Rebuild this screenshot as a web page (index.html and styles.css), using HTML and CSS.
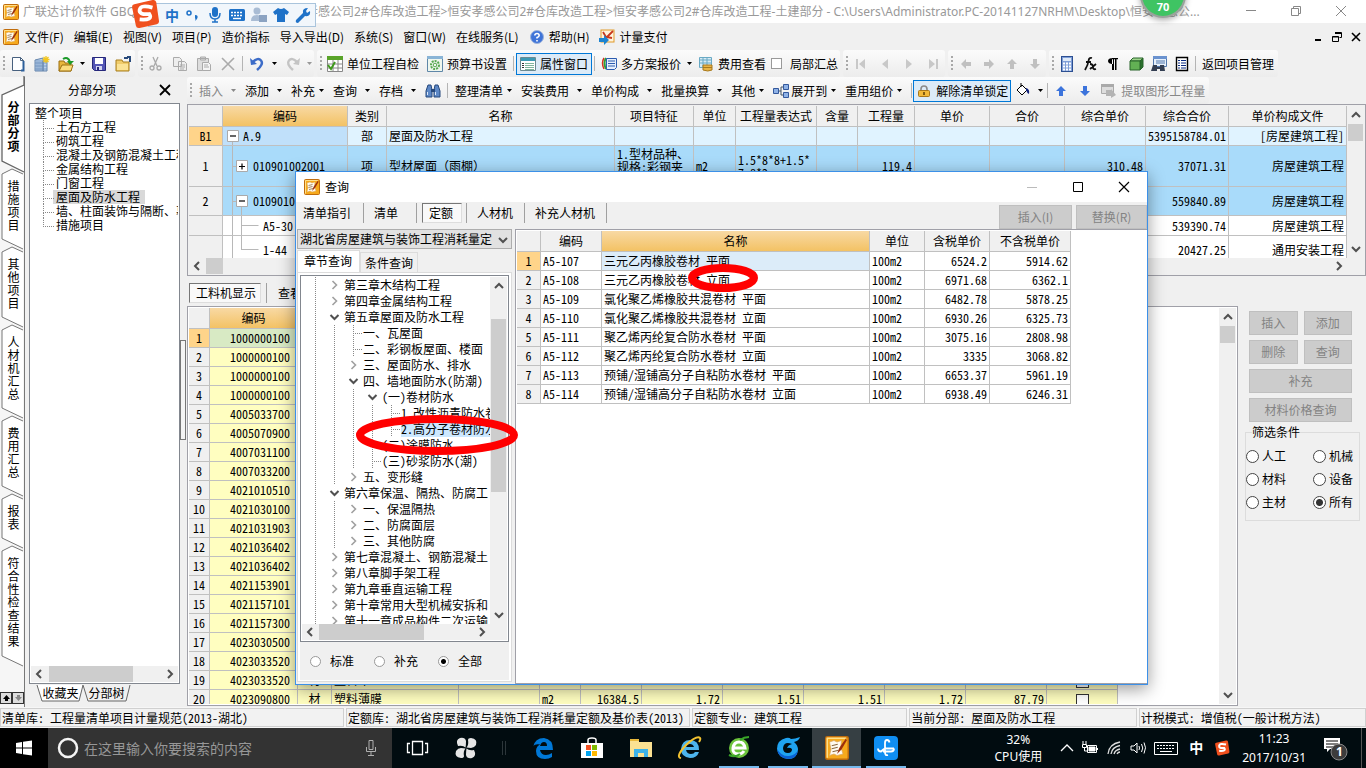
FILE: index.html
```html
<!DOCTYPE html>
<html lang="zh-CN">
<head>
<meta charset="utf-8">
<title>广联达计价软件</title>
<link rel="stylesheet" href="styles.css">
</head>
<body>
<svg class="defs" aria-hidden="true">
  <symbol id="app" viewBox="0 0 16 16"><rect x=".5" y=".5" width="15" height="15" rx="1" fill="#f6a91c" stroke="#c06c0c"/><path d="M1.500 14.500V1.500H14" fill="none" stroke="#ffdf8a"/><path d="M3 4l3-1 2 1 3-1-.5 4 1.500 5-4 1-2-1-3 1 1-4z" fill="#fffaf0" stroke="#d9a860" stroke-width=".5"/><path d="M4.500 6.500l4-1M4.500 8.500l4-1M5 10.500l4-1" stroke="#8a6a42" stroke-width=".8"/><path d="M14 1.500L9.500 8 8 12l3-3 3.500-6z" fill="#9c2f0c"/></symbol>
  <symbol id="car" viewBox="0 0 7 4"><path d="M1 0h5L3.500 3z" fill="currentColor"/></symbol>
  <symbol id="cl" viewBox="0 0 10 10"><path d="M7 1L3 5l4 4" fill="none" stroke="#505050" stroke-width="2"/></symbol>
  <symbol id="cr" viewBox="0 0 10 10"><path d="M3 1l4 4-4 4" fill="none" stroke="#505050" stroke-width="2"/></symbol>
  <symbol id="cu" viewBox="0 0 10 10"><path d="M1 7l4-4 4 4" fill="none" stroke="#505050" stroke-width="2"/></symbol>
  <symbol id="cd" viewBox="0 0 10 10"><path d="M1 3l4 4 4-4" fill="none" stroke="#505050" stroke-width="2"/></symbol>
  <symbol id="cg" viewBox="0 0 10 10"><path d="M3 1l4 4-4 4" fill="none" stroke="#a0a0a0" stroke-width="1.600"/></symbol>
  <symbol id="aup" viewBox="0 0 12 12"><path d="M6 1l5 5H8v5H4V6H1z"/></symbol>
  <symbol id="sogou" viewBox="0 0 28 28"><path d="M4 5L21 1q3-.5 3.500 2L27 20q.5 3-2 3.500L9 27q-3 .5-3.500-2L2 8q-.5-2.500 2-3z" fill="#f0501e"/><path d="M21 8Q10 5 9 10t9 4q4 6-9 5" fill="none" stroke="#fff" stroke-width="3.500"/></symbol>
</svg>

<header class="titlebar">
  <svg class="i16"><use href="#app"/></svg>
  <span class="t1">广联达计价软件 GBQ4.0 - [</span>
  <span class="t2">恒安孝感公司2#仓库改造工程&gt;恒安孝感公司2#仓库改造工程&gt;恒安孝感公司2#仓库改造工程-土建部分 - C:\Users\Administrator.PC-20141127NRHM\Desktop\恒安孝感公...</span>
  <div class="winbtns">
    <button aria-label="最小化"><svg width="12" height="12"><path d="M1 5.500h10" stroke="#888"/></svg></button>
    <button aria-label="还原"><svg width="12" height="12" fill="none" stroke="#888"><path d="M1.500 3.500h7v7h-7zM3.500 3.500v-2h7v7h-2"/></svg></button>
    <button aria-label="关闭"><svg width="12" height="12"><path d="M1 1l10 10M11 1L1 11" stroke="#888"/></svg></button>
  </div>
</header>

<nav class="menubar">
  <svg class="i16"><use href="#app"/></svg>
  <button>文件(F)</button><button>编辑(E)</button><button>视图(V)</button><button>项目(P)</button><button>造价指标</button><button>导入导出(D)</button><button>系统(S)</button><button>窗口(W)</button><button>在线服务(L)</button>
  <button><svg class="i16"><circle cx="8" cy="8" r="6.500" fill="#3f74d8" stroke="#9db4dc"/><path d="M5.800 6.500Q6 4.500 8 4.500t2.200 2Q10 8 8 8.500V9.500M8 11v1.500" fill="none" stroke="#fff" stroke-width="1.600"/></svg>帮助(H)</button>
  <button><svg class="i16"><rect x="2" y="1" width="13" height="12" fill="#fff3dc" stroke="#e09a28"/><path d="M14 2L7 9M4 3l3 5 6 1" stroke="#c8381c" stroke-width="1.800" fill="none"/><path d="M0 9h5V6l5 5-5 5v-3H0z" fill="#1d84d0"/></svg>计量支付</button>
  <div class="mdi">
    <button aria-label="最小化子窗口"><svg width="10" height="10"><path d="M2 8h6" stroke="#000" stroke-width="2"/></svg></button>
    <button aria-label="还原子窗口"><svg width="10" height="10" fill="none" stroke="#000"><path d="M3 .500h6.500v5h-2M3 1.500h6M.5 4.500h6v5h-6zM.5 5h6"/></svg></button>
    <button aria-label="关闭子窗口"><svg width="10" height="10"><path d="M1 1l8 8M9 1L1 9" stroke="#000" stroke-width="1.600"/></svg></button>
  </div>
</nav>

<div class="toolbar">
  <div class="grp">
    <i class="grip"></i>
    <button class="ib" aria-label="新建"><svg class="i16"><path d="M2.500 1.500h8l3 3v10h-11z" fill="#fdfeff" stroke="#47607e"/><path d="M10.500 1.500v3h3" fill="none" stroke="#47607e"/><path d="M11 14.500h2.500V5" stroke="#2c5f9a" stroke-width="2" fill="none"/></svg></button>
    <button class="ib" aria-label="新建项目"><svg class="i16"><path d="M1 4l8-2v13H1zM9 5h4v10H9z" fill="#b9d0ea" stroke="#6484ab"/><path d="M3 4v11M5 4v11M7 4v11M1 7h12M1 10h12M1 13h12" stroke="#6c8fbd" stroke-width=".8"/><path d="M12 0v7M8.500 3.500h7M9.500 1l5 5M14.500 1l-5 5" stroke="#f2c61e" stroke-width="1.300"/></svg></button>
    <button class="ib" aria-label="打开"><svg class="i16"><path d="M1 5h5l1 2h6v8H1z" fill="#e9b63c" stroke="#9b6f10"/><path d="M1 15l3-6h11l-2 6z" fill="#fbdc7d" stroke="#9b6f10"/><path d="M5 3q5-3 7 3" fill="none" stroke="#1c9a2a" stroke-width="2"/><path d="M9 5h7l-4 4z" fill="#1c9a2a"/></svg></button>
    <svg class="car"><use href="#car"/></svg>
    <button class="ib" aria-label="保存"><svg class="i16"><path d="M1.500 1.500h13v13h-11l-2-2z" fill="#5456b5" stroke="#25277a"/><path d="M4 2h8v6H4z" fill="#fff"/><path d="M5 10h6v4H5z" fill="#d4d6f0"/><path d="M6 11h2v3H6z" fill="#25277a"/></svg></button>
    <button class="ib" aria-label="文件夹"><svg class="i16"><path d="M1 4h6l1 2h6v9H1z" fill="#f0cc6a" stroke="#a87e1c"/><path d="M2 8h11v6H2z" fill="#fbe394"/><path d="M9 2h4M12 1h3v5" fill="none" stroke="#2a4b7c" stroke-width="2"/></svg></button>
  </div>
  <div class="grp">
    <i class="grip"></i>
    <button class="ib" aria-label="剪切"><svg class="i16" fill="none" stroke="#aaa" stroke-width="1.300"><path d="M5 1l4 9M10 1L6 10"/><circle cx="4" cy="12" r="2"/><circle cx="11" cy="12" r="2"/></svg></button>
    <button class="ib" aria-label="复制"><svg class="i16" fill="#eee" stroke="#aaa"><path d="M1.500 1.500h6l2 2v7h-8zM6.500 5.500h6l2 2v7h-8z"/><path d="M8 9h5M8 11h5M8 13h4"/></svg></button>
    <button class="ib" aria-label="粘贴"><svg class="i16" fill="#ddd" stroke="#aaa"><path d="M1.500 2.500h11v12h-11zM4.500 1h5v3h-5z"/><path d="M6.500 6.500h6l2 2v6h-8z" fill="#f4f4f4"/><path d="M8 9h4M8 11h5"/></svg></button>
    <button class="ib" aria-label="删除"><svg class="i16"><path d="M2 2l12 12M14 2L2 14" stroke="#aaa" stroke-width="1.600"/></svg></button>
    <i class="sep"></i>
    <button class="ib" aria-label="撤销"><svg class="i16"><path d="M4 6q5-5 8-1.500T8 14" fill="none" stroke="#3c6cc8" stroke-width="2.500"/><path d="M1 2l1 7 6-1z" fill="#3c6cc8"/></svg></button>
    <svg class="car wide"><use href="#car"/></svg>
    <button class="ib" aria-label="重做"><svg class="i16"><path d="M12 6Q7 1 4 4.500T8 14" fill="none" stroke="#c4c4c4" stroke-width="2.500"/><path d="M15 2l-1 7-6-1z" fill="#c4c4c4"/></svg></button>
    <svg class="car dim"><use href="#car"/></svg>
  </div>
  <div class="grp">
    <i class="grip"></i>
    <button class="lb"><svg class="i16"><path d="M.5 .5h15v15H.5z" fill="#fff" stroke="#888"/><path d="M0 0h16v4H0z" fill="#5aa42a"/><path d="M1 8h14M1 12h14M6 4v11M11 4v11" stroke="#888"/><path d="M1 9l3 4 4-7" fill="none" stroke="#3f9a1c" stroke-width="2"/></svg>单位工程自检</button>
    <button class="lb"><svg class="i16"><path d="M.5 .5h15v15H.5z" fill="#eef6ee" stroke="#5f87a8"/><path d="M0 0h16v3H0z" fill="#8ab4d6"/><circle cx="8" cy="9" r="4" fill="none" stroke="#58a850" stroke-width="2" stroke-dasharray="2 1"/><circle cx="8" cy="9" r="1.800" fill="none" stroke="#58a850"/></svg>预算书设置</button>
    <i class="sep"></i>
    <button class="lb on"><svg class="i16"><path d="M.5 1.500h15v13H.5z" fill="#fff" stroke="#6a8a92"/><path d="M1 2h14v3H1z" fill="#3c9ab4"/><path d="M2 7.500h2M2 9.500h2M2 11.500h2" stroke="#333"/><path d="M5 7.500h9M5 9.500h9M5 11.500h9M5 13.500h9" stroke="#7fb69c"/></svg>属性窗口</button>
    <i class="sep"></i>
    <button class="lb"><svg class="i16"><path d="M3 2Q0 7 3 13" fill="none" stroke="#d83020" stroke-width="1.500"/><path d="M5 2Q2 7 5 13" fill="none" stroke="#2f9e3a" stroke-width="2"/><path d="M5.500 2.500h10v9l-2 2h-8z" fill="#e6effc" stroke="#2c5cb0"/><path d="M7 5h7M7 7.500h7M7 10h7" stroke="#2c5cb0"/></svg>多方案报价</button>
    <svg class="car"><use href="#car"/></svg>
    <button class="lb"><svg class="i16"><path d="M1.500 1.500h12v10h-12z" fill="#d6ebf5" stroke="#69a9c4"/><path d="M1 4h13M1 7h13M5 1v10M9 1v10" stroke="#69a9c4"/><path d="M5 9h9v5q-4 2-9 0z" fill="#e8b446" stroke="#a8791c"/><path d="M5 11.500h9" stroke="#a8791c"/></svg>费用查看</button>
    <label class="chk"><input type="checkbox">局部汇总</label>
  </div>
  <div class="grp">
    <i class="grip"></i>
    <button class="ib" aria-label="首页"><svg class="i16" fill="#c8c8c8"><path d="M3 3h2v10H3zM12 3v10L6 8z"/></svg></button>
    <button class="ib" aria-label="上一页"><svg class="i16" fill="#c8c8c8"><path d="M11 3v10L5 8z"/></svg></button>
    <button class="ib" aria-label="下一页"><svg class="i16" fill="#c8c8c8"><path d="M5 3v10l6-5z"/></svg></button>
    <button class="ib" aria-label="末页"><svg class="i16" fill="#c8c8c8"><path d="M4 3v10l6-5zM11 3h2v10h-2z"/></svg></button>
  </div>
  <div class="grp tight gray">
    <i class="grip"></i>
    <button class="ib" aria-label="左移"><svg class="i12 r270"><use href="#aup"/></svg></button>
    <button class="ib" aria-label="右移"><svg class="i12 r90"><use href="#aup"/></svg></button>
    <button class="ib" aria-label="上移"><svg class="i12"><use href="#aup"/></svg></button>
    <button class="ib" aria-label="下移"><svg class="i12 r180"><use href="#aup"/></svg></button>
  </div>
  <div class="grp tight last">
    <i class="grip"></i>
    <button class="ib" aria-label="计算器"><svg class="i16"><rect x="2.500" y=".5" width="11" height="15" fill="#7f9fd8" stroke="#2c4f92"/><path d="M4 2h8v3H4z" fill="#dfeaf8"/><path d="M4 7.500h8M4 10.500h8M4 13.500h8" stroke="#fff" stroke-width="2" stroke-dasharray="2 1"/></svg></button>
    <button class="ib" aria-label="函数"><svg class="i16" fill="none" stroke="#111" stroke-width="1.800"><path d="M10 2Q7 1 6.500 5T3 14M4 6h5M8 8q3 0 3 3t3 2M14 8L8 13"/></svg></button>
    <button class="ib" aria-label="段落"><svg class="i16"><path d="M8 2Q3 2 3 5t5 3zM7 2h2v12H7zM10 2h1.500v12H10zM7 2h6v1.200H7z"/></svg></button>
    <button class="ib" aria-label="立方体"><svg class="i16"><path d="M2 5l3-3h10l-3 3z" fill="#9ed48c" stroke="#28642a"/><path d="M12 5l3-3v9l-3 3z" fill="#2b702d" stroke="#28642a"/><path d="M2 5h10v9H2z" fill="#62b054" stroke="#28642a"/></svg></button>
    <button class="ib" aria-label="查找表"><svg class="i16"><path d="M2.500 .5h13v10h-13z" fill="#e6f0fb" stroke="#5177ac"/><path d="M2 0h14v3H2z" fill="#6a92cf"/><path d="M5 5h9M5 7h9" stroke="#5177ac"/><path d="M2 9h4v2h3V9h4l1 6H9v-2H6v2H0z" fill="#333e52"/></svg></button>
    <button class="ib" aria-label="清单"><svg class="i16"><path d="M2.500 1.500h11v13h-11z" fill="#fff" stroke="#000" stroke-width="1.400"/><path d="M4 4.500h2M4 7h2M4 9.500h2M4 12h2M7 4.500h5M7 7h5M7 9.500h5M7 12h5" stroke="#0a2a80"/></svg></button>
    <i class="sep"></i>
    <button class="lb">返回项目管理</button>
  </div>
</div>

<main class="work">
  <nav class="vtabs">
    <button class="vt first"><svg width="25" height="96"><path d="M24-1v9L2 18v66l22 11" fill="#fff" stroke="#666" stroke-width="1.300"/></svg><span>分部分项</span></button>
    <button class="vt"><svg width="25" height="82"><path d="M23 5L12 0 2 5v65l21 10" fill="#fff" stroke="#777"/></svg><span>措施项目</span></button>
    <button class="vt"><svg width="25" height="82"><path d="M23 5L12 0 2 5v65l21 10" fill="#fff" stroke="#777"/></svg><span>其他项目</span></button>
    <button class="vt"><svg width="25" height="95"><path d="M23 5L12 0 2 5v78l21 10" fill="#fff" stroke="#777"/></svg><span>人材机汇总</span></button>
    <button class="vt"><svg width="25" height="82"><path d="M23 5L12 0 2 5v65l21 10" fill="#fff" stroke="#777"/></svg><span>费用汇总</span></button>
    <button class="vt"><svg width="25" height="56"><path d="M23 5L12 0 2 5v39l21 10" fill="#fff" stroke="#777"/></svg><span>报表</span></button>
    <button class="vt"><svg width="25" height="121"><path d="M23 5L12 0 2 5v105l21 10" fill="#fff" stroke="#777"/></svg><span>符合性检查结果</span></button>
    <div class="vend"><button aria-label="上"><svg width="11" height="10"><path d="M5.500 2L9 6H7v2H4V6H2z"/></svg></button><button aria-label="下"><svg width="11" height="10"><path d="M5.500 8L9 4H7V2H4v2H2z" fill="#888"/></svg></button></div>
  </nav>

  <aside class="left">
    <div class="lhead"><span>分部分项</span><button aria-label="关闭面板"><svg width="12" height="12"><path d="M1 1l10 10M11 1L1 11" stroke="#000" stroke-width="1.800"/></svg></button></div>
    <div class="ltree">
      <ul>
        <li class="root">整个项目</li>
        <li>土石方工程</li><li>砌筑工程</li><li>混凝土及钢筋混凝土工程</li><li>金属结构工程</li><li>门窗工程</li><li><b>屋面及防水工程</b></li><li>墙、柱面装饰与隔断、幕墙</li><li>措施项目</li>
      </ul>
      <div class="hs"><svg class="c10"><use href="#cl"/></svg><i class="lthumb"></i><svg class="c10 end"><use href="#cr"/></svg></div>
    </div>
    <div class="ltabs">
      <button><svg width="48" height="17"><path d="M1 0l5 16h37l4-16" fill="#fff" stroke="#666"/></svg><span>收藏夹</span></button>
      <button><svg width="50" height="17"><path d="M1 0l5 16h38l4-16" fill="#f0f0f0" stroke="#666"/></svg><span>分部树</span></button>
    </div>
  </aside>
  <div class="split"><i></i></div>

  <section class="right">
    <div class="toolbar t2bar"><div class="grp last">
      <i class="grip"></i>
      <button class="dd dis">插入<svg class="car w"><use href="#car"/></svg></button>
      <button class="dd">添加<svg class="car w"><use href="#car"/></svg></button>
      <button class="dd">补充<svg class="car n"><use href="#car"/></svg></button>
      <button class="dd">查询<svg class="car w"><use href="#car"/></svg></button>
      <button class="dd">存档<svg class="car w"><use href="#car"/></svg></button>
      <button aria-label="查找"><svg class="i16"><path d="M3 2h3l1 5v7H1V8zM10 2h3l2 6v6H9V7z" fill="#5d88c6" stroke="#27497c"/><path d="M6 6h4v3H6z" fill="#27497c"/><path d="M2.500 9v3M10.500 9v3" stroke="#dce9fa"/></svg></button>
      <i class="sep s2"></i>
      <button class="dd">整理清单<svg class="car n"><use href="#car"/></svg></button>
      <button class="dd">安装费用<svg class="car w"><use href="#car"/></svg></button>
      <button class="dd">单价构成<svg class="car w"><use href="#car"/></svg></button>
      <button class="dd">批量换算<svg class="car w"><use href="#car"/></svg></button>
      <button class="dd">其他<svg class="car n"><use href="#car"/></svg></button>
      <button class="dd"><svg class="i16"><path d="M5 8h3M11 4H8v8h3" fill="none" stroke="#456"/><path d="M.5 5.500h5v5h-5zM10.500 1.500h5v5h-5zM10.500 9.500h5v5h-5z" fill="#8fb2e6" stroke="#33589c"/></svg>展开到<svg class="car n"><use href="#car"/></svg></button>
      <button class="dd">重用组价<svg class="car n"><use href="#car"/></svg></button>
      <i class="sep"></i>
      <button class="lb on lock"><svg class="i12"><path d="M3 6V4q0-3 3-3t3 3v2" fill="none" stroke="#8a8a8a" stroke-width="1.600"/><rect x=".5" y="5.500" width="11" height="6" rx="1" fill="#f1b93a" stroke="#a8761a"/><path d="M6 7v3" stroke="#5a3c08" stroke-width="1.500"/></svg>解除清单锁定</button>
      <button class="ib" aria-label="填充"><svg class="i16"><path d="M2 7l5-5 5 5-5 5z" fill="#fff" stroke="#000"/><path d="M6 4V0" stroke="#000"/><path d="M11 5q4 1 3 6-2-1-3-4z" fill="#12237c"/></svg></button>
      <svg class="car wide"><use href="#car"/></svg>
      <i class="sep"></i>
      <button class="ib blue" aria-label="上移行"><svg class="i12"><use href="#aup"/></svg></button>
      <button class="ib blue" aria-label="下移行"><svg class="i12 r180"><use href="#aup"/></svg></button>
      <button class="lb dis"><svg class="i16"><path d="M.5 1.500h12v9H.5z" fill="#ddd" stroke="#aaa"/><path d="M0 1h13v3H0z" fill="#aaa"/><path d="M5 7h5v-1l5 6-5 3v-2H5z" fill="#b4b4b4"/></svg>提取图形工程量</button>
    </div></div>

    <div class="g1">
      <div class="g1row">
        <div class="g1scroll">
          <table class="grid gtop">
            <colgroup><col style="width:34px"><col style="width:125px"><col style="width:39px"><col style="width:228px"><col style="width:79px"><col style="width:42px"><col style="width:81px"><col style="width:41px"><col style="width:57px"><col style="width:75px"><col style="width:75px"><col style="width:81px"><col style="width:83px"><col></colgroup>
            <tr class="h"><th></th><th class="gold">编码</th><th>类别</th><th>名称</th><th>项目特征</th><th>单位</th><th>工程量表达式</th><th>含量</th><th>工程量</th><th>单价</th><th>合价</th><th>综合单价</th><th>综合合价</th><th>单价构成文件</th></tr>
            <tr class="b1"><th class="cur">B1</th><td class="cell0"><div class="tc"><svg width="20" height="18"><path d="M9.500 15v4" stroke="#b8b8b8"/><path d="M4.500 3.500h11v11h-11z" fill="#fff" stroke="#aaa"/><path d="M7 9h6" stroke="#000" stroke-width="1.200"/></svg>A.9</div></td><td class="c">部</td><td>屋面及防水工程</td><td></td><td></td><td></td><td></td><td></td><td></td><td></td><td></td><td class="r">5395158784.01</td><td class="r">[房屋建筑工程]</td></tr>
            <tr class="r1"><th>1</th><td><div class="tc"><svg width="30" height="40"><path d="M9.500 0v41M9.500 20.500h5" stroke="#b8b8b8"/><path d="M13.500 14.500h11v11h-11z" fill="#fff" stroke="#aaa"/><path d="M16 20.500h6M19 17.500v6" stroke="#000" stroke-width="1.200"/></svg>010901002001</div></td><td class="c">项</td><td>型材屋面（雨棚）</td><td><div class="clip">1.型材品种、规格:彩钢夹芯板</div></td><td>m2</td><td><div class="clip low">1.5*8*8+1.5*7.8*2</div></td><td></td><td class="r">119.4</td><td></td><td></td><td class="r">310.48</td><td class="r">37071.31</td><td class="r">房屋建筑工程</td></tr>
            <tr class="r2"><th>2</th><td><div class="tc"><svg width="30" height="28"><path d="M9.500 0v29M9.500 14.500h5M18.500 20v9" stroke="#b8b8b8"/><path d="M13.500 8.500h11v11h-11z" fill="#fff" stroke="#aaa"/><path d="M16 14h6" stroke="#000" stroke-width="1.200"/></svg>010901003001</div></td><td></td><td></td><td></td><td></td><td></td><td></td><td></td><td></td><td></td><td></td><td class="r">559840.89</td><td class="r">房屋建筑工程</td></tr>
            <tr class="r3"><th></th><td><div class="tc"><svg width="40" height="19"><path d="M9.500 0v20M18.500 0v20M18.500 9.500h17" stroke="#b8b8b8"/></svg>A5-30</div></td><td></td><td></td><td></td><td></td><td></td><td></td><td></td><td></td><td></td><td></td><td class="r">539390.74</td><td class="r">房屋建筑工程</td></tr>
            <tr class="r4"><th></th><td><div class="tc"><svg width="40" height="27"><path d="M9.500 0v27M18.500 0v14M18.500 13.500h17" stroke="#b8b8b8"/></svg>1-44</div></td><td></td><td></td><td></td><td></td><td></td><td></td><td></td><td></td><td></td><td></td><td class="r">20427.25</td><td class="r">通用安装工程</td></tr>
          </table>
        </div>
        <div class="vs"><svg class="c10"><use href="#cu"/></svg><i class="vthumb"></i><svg class="c10 end"><use href="#cd"/></svg></div>
      </div>
      <div class="hs g1hs"><svg class="c10"><use href="#cl"/></svg><i class="sthumb"></i><svg class="c10 end"><use href="#cr"/></svg></div>
    </div>

    <div class="subtabs"><button class="pressed">工料机显示</button><i class="sep"></i><button>查看</button></div>

    <div class="lower">
      <div class="g2">
        <div class="g2scroll">
          <table class="grid gbot">
            <colgroup><col style="width:21px"><col style="width:88px"><col style="width:34px"><col style="width:127px"><col style="width:81px"><col style="width:41px"><col style="width:61px"><col style="width:81px"><col style="width:81px"><col style="width:81px"><col style="width:81px"><col style="width:81px"><col style="width:71px"></colgroup>
            <tr class="h"><th></th><th class="gold">编码</th><th></th><th></th><th></th><th></th><th></th><th></th><th></th><th></th><th></th><th></th><th></th></tr>
            <tr><th class="cur">1</th><td class="code sel">1000000100</td><td colspan="11"></td></tr>
            <tr><th>2</th><td class="code">1000000100</td><td colspan="11"></td></tr>
            <tr><th>3</th><td class="code">1000000100</td><td colspan="11"></td></tr>
            <tr><th>4</th><td class="code">1000000100</td><td colspan="11"></td></tr>
            <tr><th>5</th><td class="code">4005033700</td><td colspan="11"></td></tr>
            <tr><th>6</th><td class="code">4005070900</td><td colspan="11"></td></tr>
            <tr><th>7</th><td class="code">4007031100</td><td colspan="11"></td></tr>
            <tr><th>8</th><td class="code">4007033200</td><td colspan="11"></td></tr>
            <tr><th>9</th><td class="code">4021010510</td><td colspan="11"></td></tr>
            <tr><th>10</th><td class="code">4021030100</td><td colspan="11"></td></tr>
            <tr><th>11</th><td class="code">4021031903</td><td colspan="11"></td></tr>
            <tr><th>12</th><td class="code">4021036402</td><td colspan="11"></td></tr>
            <tr><th>13</th><td class="code">4021036402</td><td colspan="11"></td></tr>
            <tr><th>14</th><td class="code">4021153901</td><td colspan="11"></td></tr>
            <tr><th>15</th><td class="code">4021157101</td><td colspan="11"></td></tr>
            <tr><th>16</th><td class="code">4021157300</td><td colspan="11"></td></tr>
            <tr><th>17</th><td class="code">4023030500</td><td colspan="11"></td></tr>
            <tr><th>18</th><td class="code">4023033520</td><td colspan="11"></td></tr>
            <tr><th>19</th><td class="code">4023033520</td><td class="c">材</td><td class="l">塑料布</td><td></td><td></td><td></td><td></td><td></td><td></td><td></td><td></td><td class="c"><input type="checkbox" aria-label="19"></td></tr>
            <tr><th>20</th><td class="code">4023090800</td><td class="c">材</td><td class="l">塑料薄膜</td><td></td><td class="l">m2</td><td class="r">16384.5</td><td class="r">1.72</td><td class="r">1.51</td><td class="r">1.51</td><td class="r">1.72</td><td class="r">87.79</td><td class="c"><input type="checkbox" aria-label="20"></td></tr>
          </table>
        </div>
        <div class="vs"><svg class="c10"><use href="#cu"/></svg><i class="vthumb"></i><svg class="c10 end"><use href="#cd"/></svg></div>
      </div>
      <aside class="side">
        <div class="sbtns"><button disabled>插入</button><button disabled>添加</button><button disabled>删除</button><button disabled>查询</button><button class="full" disabled>补充</button><button class="full" disabled>材料价格查询</button></div>
        <fieldset><legend>筛选条件</legend>
          <label><input type="radio" name="f">人工</label><label><input type="radio" name="f">机械</label>
          <label><input type="radio" name="f">材料</label><label><input type="radio" name="f">设备</label>
          <label><input type="radio" name="f">主材</label><label><input type="radio" name="f" checked>所有</label>
        </fieldset>
      </aside>
    </div>
  </section>
</main>

<footer class="status"><span class="s1">清单库: 工程量清单项目计量规范(2013-湖北)</span><span class="s1">定额库: 湖北省房屋建筑与装饰工程消耗量定额及基价表(2013)</span><span class="s3">定额专业: 建筑工程</span><span class="s4">当前分部: 屋面及防水工程</span><span class="s4">计税模式: 增值税(一般计税方法)</span></footer>

<div class="taskbar">
  <button class="start" aria-label="开始"><svg width="18" height="18" fill="#fff"><path d="M1 4l6-1v5.500H1zM8 2.800L17 1.500v7H8zM1 9.500h6V15l-6-1zM8 9.500h9v7l-9-1.300z"/></svg></button>
  <label class="search"><svg width="24" height="24"><circle cx="12" cy="12" r="9" fill="none" stroke="#f4f4f4" stroke-width="2.500"/></svg><input type="text" placeholder="在这里输入你要搜索的内容" aria-label="搜索"><svg class="i16" fill="none" stroke="#b0b0b0"><path d="M6 .5h4v9H6zM3.500 7v4.500h9V7M8 12v3.500M5 15.500h6"/></svg></label>
  <button class="tk" aria-label="任务视图"><svg width="22" height="22" fill="none" stroke="#fff"><path d="M6.500 4.500h10v13h-10zM4 6.500H1.500v9H4M19 6.500h2.500v9H19" stroke-width="1.300"/></svg></button>
  <button class="tk" aria-label="风车"><svg width="24" height="24" fill="#e6e6e6"><path d="M11.500 11.500Q9 9 4 10q-3-6 2-8 5-1 6 3 0 4-.5 6.500zM12.500 11.500Q15 9 14 4q0-2 3-2 7 1 5 7-2 3-5 3zM12.500 12.500Q15 15 20 14q3 6-2 8-5 1-6-3 0-4 .5-6.500zM11.500 12.500Q9 15 10 20q0 2-3 2-7-1-5-7 2-3 5-3z"/></svg></button>
  <i class="tdiv"></i>
  <button class="tk" aria-label="Edge"><svg width="22" height="22"><path d="M1 10Q3 1 12 1q9 1 9 12H8q1 5 6 5 3 0 6-2v4q-3 2-7 2-9 0-9-8 0-5 5-7-8 0-8 3zM8 9h7q0-4-3-4t-4 4z" fill="#0078d7"/></svg></button>
  <button class="tk" aria-label="商店"><svg width="24" height="24"><path d="M8 7V4q0-2 4-2t4 2v3" fill="none" stroke="#fff" stroke-width="1.500"/><path d="M1 7h22v15H1z" fill="#fff"/><path d="M6 9h5v5H6z" fill="#f25022"/><path d="M12 9h5v5h-5z" fill="#7fba00"/><path d="M6 15h5v5H6z" fill="#00a4ef"/><path d="M12 15h5v5h-5z" fill="#ffb900"/></svg></button>
  <button class="tk" aria-label="文件资源管理器"><svg width="22" height="20"><path d="M0 1h9v3h13v15H0z" fill="#fbe192"/><path d="M0 1h9v2H0z" fill="#e9b93c"/><path d="M4 11h14v8h-4v-4H8v4H4z" fill="#3db2e8"/></svg></button>
  <button class="tk" aria-label="IE"><svg width="26" height="26"><path d="M22 15H9q1 4 5 4 3 0 4-2h4q-2 6-9 6-9-1-9-9 1-9 9-9 9 0 9 10zM9 12h8q-1-3-4-3t-4 3z" fill="#4db4ec"/><path d="M4 23Q-2 22 9 10 20 0 23 3q1 1-1 4" fill="none" stroke="#f2c230" stroke-width="2"/></svg></button>
  <button class="tk run" aria-label="浏览器"><svg width="24" height="24"><circle cx="12" cy="12" r="10" fill="#6cc43c"/><path d="M7 12h11q-1-6-6-6t-6 6 6 6q3 0 5-3" fill="none" stroke="#fff" stroke-width="3"/><path d="M2 19Q8 22 13 18M22 1q-5 0-9 3" fill="none" stroke="#38a428" stroke-width="2"/></svg></button>
  <button class="tk run" aria-label="G"><svg width="26" height="26"><path d="M25 2q-1 4-6 5 4 3 4 8-1 9-10 9Q3 23 2 14 2 5 11 3q3-1 5 1 4 0 9-2zM17 9q-8-3-9 4 0 5 5 5 4 0 4-4-2-2-5-1 1-3 5-4z" fill="#1fa3f0"/><path d="M2 14q1 9 11 10 9 0 10-9-2 5-9 6T2 14z" fill="#0b62d4"/></svg></button>
  <button class="tk run act" aria-label="计价软件"><svg width="24" height="24"><use href="#app"/></svg></button>
  <button class="tk run" aria-label="助手"><svg width="24" height="24"><rect width="24" height="24" rx="4" fill="#0f8ef2"/><path d="M15.500 6.500Q15 4 13 4t-2 3v9q0 4 3 3M4 12.500q0 3 3 3 3-3 5-3h8M20 12.500q0 3-3 3H9" fill="none" stroke="#fff" stroke-width="1.800"/></svg></button>
  <div class="tray">
    <div class="cpu">32%<br>CPU使用</div>
    <svg width="14" height="14" fill="none" stroke="#fff" stroke-width="1.300"><path d="M1 10l6-6 6 6"/></svg>
    <svg class="i16" fill="none" stroke="#fff"><path d="M5.500 5.500h9v7h-9zM15.500 8v2M1 1v3M4 1v3M.5 4.500h4v3h-4zM2.500 8v3h3"/><path d="M7 7h6v4H7z" fill="#fff"/></svg>
    <svg class="i16" fill="none" stroke="#ddd"><path d="M2 14Q3 4 14 2M5 14Q6 7 14 5.500M8 14q1-4 6-5M11 14q1-2 3-2" stroke-width="1.300"/></svg>
    <svg class="i16" fill="none" stroke="#fff"><path d="M1 6h3l3-3v10L4 10H1zM9 6q1 2 0 4M11.500 4q2.500 4 0 8M14 2.500q3 5 0 11"/></svg>
    <svg width="24" height="16" fill="none" stroke="#fff"><path d="M.5 2.500h23v12H.5z"/><path d="M3 5.500h18M3 8.500h18" stroke-dasharray="2 1"/><path d="M6 11.500h12"/></svg>
    <span class="zh">中</span>
    <svg class="i16"><use href="#sogou"/></svg>
    <div class="clock">11:23<br>2017/10/31</div>
    <div class="note"><svg width="26" height="26"><path d="M2 3h16v11H8l-3 3v-3H2z" fill="#fff"/><path d="M4 6h12M4 9h12M4 12h8" stroke="#000"/><circle cx="17" cy="17" r="8" fill="#3c3c3c" stroke="#888"/></svg><span>1</span></div>
  </div>
</div>

<div class="ime">
  <svg class="logo"><use href="#sogou"/></svg><span>中</span>
  <svg class="i16" fill="#1f72c8"><circle cx="4" cy="6" r="2" fill="none" stroke="#1f72c8" stroke-width="1.500"/><path d="M10 8q4 0 2 4l-2 2q1-2 0-3z"/></svg>
  <svg class="i16"><rect x="5" y="0" width="6" height="10" rx="3" fill="#1f72c8"/><path d="M3 6q0 6 5 6t5-6M8 12v3M5 15h6" fill="none" stroke="#1f72c8" stroke-width="1.500"/></svg>
  <svg class="i16"><rect x="0" y="2" width="16" height="12" rx="1.500" fill="#1f72c8"/><path d="M2 5.500h12M2 8.500h12" stroke="#fff" stroke-width="1.400" stroke-dasharray="2 1"/><path d="M4 11.500h8" stroke="#fff" stroke-width="1.400"/></svg>
  <svg class="i16" fill="#a9bcd4"><circle cx="6" cy="4" r="3.500"/><path d="M0 14q0-6 6-6t6 6z"/><rect x="8" y="8" width="8" height="7" fill="#8ba3c2"/></svg>
  <svg class="i16" fill="#1f72c8"><path d="M5 1q3 2 6 0l5 4-2 3-2-1v8H4V7L2 8 0 5z"/></svg>
  <svg class="i16"><path d="M1 13l7-7q-1-5 5-5l-2 3 1 2 3-2q1 6-5 5l-7 7q-3 0-2-3z" fill="#1f72c8"/></svg>
</div>
<div class="ball">70</div>

<section class="dialog" role="dialog" aria-label="查询">
  <div class="dtitle"><svg class="i16"><use href="#app"/></svg><span>查询</span>
    <div class="dbtn"><button aria-label="最小化"><svg width="12" height="12"><path d="M1 6.500h10" stroke="#bbb"/></svg></button><button aria-label="最大化"><svg width="12" height="12"><path d="M1.500 1.500h9v9h-9z" fill="none" stroke="#000"/></svg></button><button aria-label="关闭"><svg width="12" height="12"><path d="M1 1l10 10M11 1L1 11" stroke="#000" stroke-width="1.200"/></svg></button></div>
  </div>
  <div class="dtabs"><button>清单指引</button><i class="sep"></i><button class="wd">清单</button><i class="sep"></i><button class="pressed">定额</button><i class="sep"></i><button>人材机</button><i class="sep"></i><button>补充人材机</button><i class="sep"></i>
    <div class="dact"><button disabled>插入(I)</button><button disabled>替换(R)</button></div>
  </div>
  <div class="dbody">
    <div class="dleft">
      <div class="selwrap"><select aria-label="定额库"><option>湖北省房屋建筑与装饰工程消耗量定</option></select><svg class="c10"><use href="#cd"/></svg></div>
      <div class="qtabs"><button class="cur">章节查询</button><button>条件查询</button></div>
      <div class="qpage">
        <div class="dtree">
          <div class="trow">
            <ul>
              <li><i class="g"></i><svg><use href="#cg"/></svg><span>第三章木结构工程</span></li>
              <li><i class="g"></i><svg><use href="#cg"/></svg><span>第四章金属结构工程</span></li>
              <li><i class="g"></i><svg><use href="#cd"/></svg><span>第五章屋面及防水工程</span></li>
              <li><i class="g"></i><i class="g"></i><i class="g h"></i><span>一、瓦屋面</span></li>
              <li><i class="g"></i><i class="g"></i><i class="g h"></i><span>二、彩钢板屋面、楼面</span></li>
              <li><i class="g"></i><i class="g"></i><svg><use href="#cg"/></svg><span>三、屋面防水、排水</span></li>
              <li><i class="g"></i><i class="g"></i><svg><use href="#cd"/></svg><span>四、墙地面防水(防潮)</span></li>
              <li><i class="g"></i><i class="g"></i><i class="g"></i><svg><use href="#cd"/></svg><span>(一)卷材防水</span></li>
              <li><i class="g"></i><i class="g"></i><i class="g"></i><i class="g"></i><i class="g h"></i><span>1.改性沥青防水卷材</span></li>
              <li><i class="g"></i><i class="g"></i><i class="g"></i><i class="g"></i><i class="g h"></i><span class="hl">2.高分子卷材防水</span></li>
              <li><i class="g"></i><i class="g"></i><i class="g"></i><i class="g h"></i><span>(二)涂膜防水</span></li>
              <li><i class="g"></i><i class="g"></i><i class="g"></i><i class="g h"></i><span>(三)砂浆防水(潮)</span></li>
              <li><i class="g"></i><i class="g"></i><svg><use href="#cg"/></svg><span>五、变形缝</span></li>
              <li><i class="g"></i><svg><use href="#cd"/></svg><span>第六章保温、隔热、防腐工</span></li>
              <li><i class="g"></i><i class="g"></i><svg><use href="#cg"/></svg><span>一、保温隔热</span></li>
              <li><i class="g"></i><i class="g"></i><svg><use href="#cg"/></svg><span>二、防腐面层</span></li>
              <li><i class="g"></i><i class="g"></i><svg><use href="#cg"/></svg><span>三、其他防腐</span></li>
              <li><i class="g"></i><svg><use href="#cg"/></svg><span>第七章混凝土、钢筋混凝土</span></li>
              <li><i class="g"></i><svg><use href="#cg"/></svg><span>第八章脚手架工程</span></li>
              <li><i class="g"></i><svg><use href="#cg"/></svg><span>第九章垂直运输工程</span></li>
              <li><i class="g"></i><svg><use href="#cg"/></svg><span>第十章常用大型机械安拆和</span></li>
              <li><i class="g"></i><svg><use href="#cg"/></svg><span>第十一章成品构件二次运输</span></li>
            </ul>
            <div class="vs"><svg class="c10"><use href="#cu"/></svg><i class="dvthumb"></i><svg class="c10 end"><use href="#cd"/></svg></div>
          </div>
          <div class="hs dhs"><svg class="c10"><use href="#cl"/></svg><i class="dhthumb"></i><svg class="c10 end"><use href="#cr"/></svg></div>
        </div>
        <div class="radios"><label><input type="radio" name="k">标准</label><label><input type="radio" name="k">补充</label><label><input type="radio" name="k" checked>全部</label></div>
      </div>
    </div>
    <div class="dright">
      <table class="grid gdlg">
        <colgroup><col style="width:24px"><col style="width:61px"><col style="width:268px"><col style="width:55px"><col style="width:65px"><col style="width:81px"></colgroup>
        <tr class="h"><th></th><th>编码</th><th class="gold">名称</th><th>单位</th><th>含税单价</th><th>不含税单价</th></tr>
        <tr><th class="cur">1</th><td>A5-107</td><td class="sel">三元乙丙橡胶卷材 平面</td><td>100m2</td><td class="r">6524.2</td><td class="r">5914.62</td></tr>
        <tr><th>2</th><td>A5-108</td><td>三元乙丙橡胶卷材 立面</td><td>100m2</td><td class="r">6971.68</td><td class="r">6362.1</td></tr>
        <tr><th>3</th><td>A5-109</td><td>氯化聚乙烯橡胶共混卷材 平面</td><td>100m2</td><td class="r">6482.78</td><td class="r">5878.25</td></tr>
        <tr><th>4</th><td>A5-110</td><td>氯化聚乙烯橡胶共混卷材 立面</td><td>100m2</td><td class="r">6930.26</td><td class="r">6325.73</td></tr>
        <tr><th>5</th><td>A5-111</td><td>聚乙烯丙纶复合防水卷材 平面</td><td>100m2</td><td class="r">3075.16</td><td class="r">2808.98</td></tr>
        <tr><th>6</th><td>A5-112</td><td>聚乙烯丙纶复合防水卷材 立面</td><td>100m2</td><td class="r">3335</td><td class="r">3068.82</td></tr>
        <tr><th>7</th><td>A5-113</td><td>预铺/湿铺高分子自粘防水卷材 平面</td><td>100m2</td><td class="r">6653.37</td><td class="r">5961.19</td></tr>
        <tr><th>8</th><td>A5-114</td><td>预铺/湿铺高分子自粘防水卷材 立面</td><td>100m2</td><td class="r">6938.49</td><td class="r">6246.31</td></tr>
      </table>
    </div>
  </div>
</section>

<svg class="mark m1" width="164" height="42"><ellipse cx="82" cy="21" rx="77" ry="16"/></svg>
<svg class="mark m2" width="72" height="30"><ellipse cx="36" cy="15" rx="31" ry="10"/></svg>
</body>
</html>
```
FILE: styles.css
```css
* { box-sizing: border-box; }
html, body { height: 100%; }
body {
  margin: 0; position: relative; overflow: hidden; display: flex; flex-direction: column;
  background: #f0f0f0; color: #000;
  font: 12px/16px "Noto Sans CJK SC", sans-serif;
}
button { font: inherit; color: inherit; background: none; border: 0; padding: 0; margin: 0; white-space: nowrap; display: flex; align-items: center; }
ul { list-style: none; margin: 0; padding: 0; }
svg { display: block; flex: none; overflow: visible; }
.defs { position: absolute; width: 0; height: 0; }
.i16 { width: 16px; height: 16px; }
.i12 { width: 12px; height: 12px; }
.c10 { width: 10px; height: 10px; }
.r90 { transform: rotate(90deg); }
.r180 { transform: rotate(180deg); }
.r270 { transform: rotate(270deg); }

/* window title and menu */
.titlebar { height: 23px; flex: none; background: #fff; color: #999; display: flex; align-items: center; padding-left: 3px; font-family: "Noto Sans", "Noto Sans CJK SC", sans-serif; }
.t1 { width: 263px; padding-left: 4px; flex: none; white-space: nowrap; overflow: hidden; }
.t2 { flex: 1; white-space: nowrap; overflow: hidden; }
.winbtns { display: flex; gap: 33px; padding: 0 19px 2px 20px; }
.menubar { height: 27px; flex: none; display: flex; align-items: center; gap: 10px; padding-left: 3px; }
.menubar > svg { margin-right: -4px; }
.menubar button { gap: 4px; }
.mdi { margin-left: auto; display: flex; gap: 9px; padding-right: 5px; }

/* toolbars */
.toolbar { height: 27px; flex: none; display: flex; gap: 3px; }
.grp { display: flex; align-items: center; background: linear-gradient(#fbfbfb, #ececec); border-radius: 3px; }
.grip { width: 6px; height: 15px; flex: none; background: repeating-linear-gradient(#a8a8a8 0 2px, transparent 2px 4px) 3px 0 / 2px 15px no-repeat; }
.ib { width: 24px; height: 22px; justify-content: center; flex: none; }
.tight .ib { width: 23px; }
.gray .ib { fill: #c0c0c0; }
.blue { fill: #3c74dc; }
.lb { gap: 4px; padding: 0 4px; height: 22px; }
.lb.on { border: 1px solid #0078d7; background: #dcebf8; padding: 0 3px; }
.lb.lock { gap: 6px; padding: 0 2px 0 4px; }
.sep { width: 1px; height: 15px; margin: 0 2px; background: #b4b4b4; flex: none; }
.t2bar .sep { margin: 0 1px 0 0; }
.t2bar .s2 { margin: 0 7px 0 6px; }
.car { width: 7px; height: 4px; margin: 0 1px; }
.car.wide { margin: 0 3px 0 2px; }
.car.w { margin: 0 8px 0 7px; }
.car.n { margin: 0 8px 0 3px; }
.car.dim { color: #999; }
.dis { color: #888; }
.chk { display: flex; align-items: center; gap: 8px; padding: 0 2px 0 1px; }
.t2bar .grip { margin-right: 6px; }
.t2bar .dd .i16 { margin-right: 2px; }
input[type=checkbox] { appearance: none; width: 11px; height: 11px; margin: 0; border: 1px solid #999; background: #fff; flex: none; }

/* work area */
.work { flex: 1; min-height: 0; display: flex; }
.vtabs { width: 25px; flex: none; display: flex; flex-direction: column; border-right: 1px solid #777; background: #f6f6f6; }
.vt { position: relative; padding: 10px 0 16px 7px; align-items: flex-start; }
.vt svg { position: absolute; left: 0; top: 0; }
.vt span { position: relative; width: 13px; line-height: 13px; white-space: normal; word-break: break-all; }
.vt.first { padding: 23px 0 17px 7px; font-weight: bold; z-index: 1; }
.vend { margin-top: auto; display: flex; padding-bottom: 3px; }
.vend button { border: 1px solid #333; background: #ddd; height: 12px; width: 12px; }
.left { width: 155px; flex: none; padding-left: 4px; display: flex; flex-direction: column; }
.lhead { height: 26px; display: flex; align-items: center; justify-content: flex-end; gap: 43px; padding-right: 9px; }
.ltree { flex: 1; background: #fff; border: 1px solid #82878f; display: flex; flex-direction: column; overflow: hidden; padding: 2px 1px 1px; }
.ltree ul { flex: 1; margin-left: 12px; line-height: 14px; white-space: nowrap; overflow: hidden; }
.ltree li { position: relative; height: 14px; padding-left: 13px; }
.ltree ul { margin-left: 4px; }
.ltree li { margin-left: 8px; }
.ltree li.root { padding: 0; margin-left: 0; }
.ltree li:not(.root)::before { content: ""; position: absolute; left: 0; top: 0; width: 10px; height: 8px; border-left: 1px dotted #888; border-bottom: 1px dotted #888; }
.ltree li:not(.root):not(:last-child)::after { content: ""; position: absolute; left: 0; top: 8px; height: 6px; border-left: 1px dotted #888; }
.ltree b { font-weight: normal; background: #d9d9d9; display: inline-block; height: 14px; margin-left: -3px; padding: 0 5px 0 3px; }
.hs { height: 16px; flex: none; background: #f0f0f0; display: flex; align-items: center; padding: 0 3px; }
.hs i { background: #cdcdcd; height: 100%; }
.hs .end { margin-left: auto; }
.lthumb { width: 84px; margin-left: 5px; }
.ltabs { height: 23px; flex: none; padding: 1px 0 0 7px; display: flex; align-items: flex-start; }
.ltabs button { position: relative; width: 46px; justify-content: center; }
.ltabs svg { position: absolute; left: 0; top: 0; }
.ltabs span { position: relative; padding-left: 3px; }
.split { width: 7px; flex: none; display: flex; align-items: center; }
.split i { width: 6px; height: 100px; border: 1px solid #777; background: #f4f4f4; margin-top: -5px; }
.right { flex: 1; min-width: 0; display: flex; flex-direction: column; }

/* data grids */
.grid { border-spacing: 0; table-layout: fixed; font-family: "Noto Sans Mono CJK SC", "Noto Sans CJK SC", sans-serif; line-height: 14px; }
.grid th, .grid td { border: 0 solid #c0c0c0; border-width: 0 1px 1px 0; padding: 0 2px; height: 19px; font-weight: normal; overflow: hidden; white-space: nowrap; text-align: left; }
.grid th { background: #f0f0f0; text-align: center; padding: 0; }
.grid .h th { height: 21px; font-family: "Noto Sans CJK SC", sans-serif; }
.grid .h .gold { background: linear-gradient(#f8d9a4, #f3c264); }
.grid .cur { background: #ffd48a; }
.grid .c { text-align: center; }
.grid .r { text-align: right; padding: 0 2px 0 0; }
.g1 { border: 1px solid #a0a0a8; background: #f0f0f0; padding: 1px; flex: none; margin-bottom: 4px; }
.g1row { display: flex; height: 152px; }
.g1scroll { flex: 1; overflow: hidden; background: #fff; }
.gtop { width: 100%; }
.gtop .b1 td { background: #e0f3ff; }
.gtop .b1 .cell0 { background: #c0e0fa; }
.gtop .r1 td, .gtop .r2 td { background: #a9dbfa; }
.gtop .r1 td { height: 41px; }
.gtop .r2 td { height: 29px; }
.gtop .r3 td { height: 20px; }
.gtop .r4 td { height: 28px; }
.tc { display: flex; align-items: center; margin-left: -2px; }
.clip { height: 38px; line-height: 13px; white-space: normal; word-break: break-all; overflow: hidden; }
.low { padding-top: 6px; }
.vs { width: 17px; flex: none; background: #f0f0f0; display: flex; flex-direction: column; align-items: center; padding: 4px 0; }
.vs i { width: 15px; background: #cdcdcd; }
.vs .end { margin-top: auto; }
.vthumb { height: 17px; margin-top: 4px; }
.g1hs { padding-right: 20px; }
.sthumb { width: 17px; margin-left: 4px; }
.subtabs { display: flex; align-items: center; height: 26px; flex: none; padding-left: 2px; }
.pressed { background: #f9f9f9; border: 1px solid #777; border-right-color: #ddd; border-bottom-color: #ddd; height: 20px; padding: 0 4px 0 6px; }
.subtabs .sep, .dtabs .sep { height: 20px; margin: 0 5px; background: #a0a0a0; }
.subtabs button:last-child { padding-left: 6px; }
.lower { flex: 1; min-height: 0; display: flex; }
.g2 { flex: 1; background: #fff; border: 1px solid #a0a0a8; display: flex; padding: 1px; margin-bottom: 1px; }
.g2scroll { flex: 1; overflow: hidden; }
.gbot { width: 929px; }
.gbot td { background: #fffec0; }
.gbot td.code { text-align: right; padding-right: 7px; }
.gbot td.sel { background: #d8eac4; }
.gbot input { width: 13px; height: 13px; border-color: #333; display: inline-block; vertical-align: middle; }
.side { width: 128px; flex: none; padding: 5px 6px 0 7px; }
.sbtns { display: grid; grid-template-columns: 1fr 1fr; gap: 5px 6px; padding: 0 8px 0 4px; }
button:disabled { background: #ccc; border: 1px solid #bfbfbf; color: #838383; height: 24px; justify-content: center; }
.sbtns .full { grid-column: span 2; }
fieldset { margin: 2px 0 0; padding: 7px 2px 9px 0; border: 1px solid #dcdcdc; display: grid; grid-template-columns: 67px 1fr; gap: 5px 0; }
legend { margin-left: 6px; padding: 0; }
label { display: flex; align-items: center; gap: 3px; white-space: nowrap; }
fieldset label { height: 18px; }
input[type=radio] { appearance: none; width: 13px; height: 13px; border-radius: 50%; border: 1px solid #444; background: #fff; margin: 0; flex: none; }
input[type=radio]:checked { background: radial-gradient(#333 3px, #fff 4px); }

.status { height: 21px; flex: none; display: flex; gap: 2px; padding: 1px 0; background: #f6f6f6; font-family: "Noto Sans Mono CJK SC", "Noto Sans CJK SC", sans-serif; }
.status span { border: 1px solid #d0d0d0; background: #f2f2f2; white-space: nowrap; overflow: hidden; flex: 227 0 0; padding-left: 1px; line-height: 17px; }
.status .s1 { flex-grow: 345; }
.status .s3 { flex-grow: 215; }

/* taskbar */
.taskbar { height: 40px; flex: none; background: #010c10; color: #fff; display: flex; align-items: stretch; }
.start { width: 48px; background: #000; justify-content: center; }
.search { width: 344px; background: #333; padding: 0 13px 0 8px; gap: 4px; }
.search input { flex: 1; min-width: 0; background: none; border: 0; padding: 0; font: 14px/20px "Noto Sans CJK SC", sans-serif; outline: 0; }
.search input::placeholder { color: #979797; opacity: 1; }
.tk { width: 49px; justify-content: center; }
.tdiv { width: 4px; height: 14px; margin: 13px 12px 0; border: 1px solid #2c363a; border-width: 0 1px; }
.run { background: linear-gradient(#76b9ed, #76b9ed) 50% 100% / 40px 2px no-repeat; }
.act { background: linear-gradient(#76b9ed, #76b9ed) 50% 100% / 49px 2px no-repeat #363f43; }
.tray { margin-left: auto; display: flex; align-items: center; gap: 8px; font-family: "Noto Sans", "Noto Sans CJK SC", sans-serif; }
.cpu { text-align: center; line-height: 17px; margin-right: 10px; }
.zh { font-size: 14px; font-weight: bold; margin: 0 3px; }
.clock { text-align: center; line-height: 19px; margin-left: 4px; }
.note { position: relative; align-self: stretch; display: flex; align-items: center; padding: 0 13px 0 8px; border-right: 1px solid #555; margin-right: 4px; }
.note span { position: absolute; left: 22px; top: 16px; font-weight: bold; }

/* floating widgets */
.ime { position: absolute; left: 148px; top: 3px; width: 168px; height: 24px; background: #f1f6fb; border: 1px solid #a9c4dc; display: flex; align-items: center; gap: 6px; padding-left: 16px; }
.ime .logo { position: absolute; left: -19px; top: -5px; width: 30px; height: 30px; }
.ime span { color: #1f72c8; font-size: 14px; font-weight: bold; }
.ball { position: absolute; left: 1140px; top: -28px; width: 46px; height: 46px; border-radius: 50%; background: #3fc463; border: 2px solid #9aa39c; box-shadow: 0 2px 6px rgba(0,0,0,.35); color: #fff; font: bold 11px/16px "Open Sans", sans-serif; text-align: center; padding-top: 25px; }
.mark { position: absolute; fill: none; stroke: #f00; stroke-width: 8; }
.m1 { left: 355px; top: 414px; }
.m2 { left: 687px; top: 263px; }

/* query dialog */
.dialog { position: absolute; left: 295px; top: 171px; width: 853px; height: 514px; border: 1px solid #3c90e8; background: #f0f0f0; display: flex; flex-direction: column; box-shadow: 0 4px 16px rgba(0,0,0,.4); }
.dtitle { height: 30px; flex: none; background: #fff; display: flex; align-items: center; gap: 5px; padding-left: 8px; }
.dbtn { margin-left: auto; display: flex; gap: 34px; padding-right: 17px; }
.dtabs { height: 27px; flex: none; display: flex; align-items: flex-start; padding: 1px 0 0; }
.dtabs > button { height: 20px; padding: 0 6px 0 5px; }
.dtabs > button:first-child { padding: 0 7px; }
.dtabs > .wd { padding: 0 13px 0 5px; }
.dtabs > .pressed { padding: 0 8px 0 6px; }
.dtabs .pressed + .sep { margin-left: 4px; }
.dact { margin-left: auto; display: flex; gap: 4px; padding-top: 2px; }
.dact button { width: 73px; }
.dact button + button { width: 71px; }
.dbody { flex: 1; min-height: 0; display: flex; }
.dleft { width: 219px; flex: none; padding: 0 3px 2px 1px; display: flex; flex-direction: column; }
.selwrap { position: relative; }
.selwrap svg { position: absolute; right: 4px; top: 6px; }
select { appearance: none; width: 215px; height: 20px; border: 1px solid #adadad; background: #e1e1e1; padding: 0 0 0 2px; font: inherit; border-radius: 0; color: #000; display: block; }
.qtabs { display: flex; align-items: flex-end; height: 22px; margin-top: 1px; }
.qtabs button { border: 1px solid #dcdcdc; border-bottom: 0; height: 20px; padding: 0 4px; background: #f0f0f0; }
.qtabs .cur { background: #fff; height: 22px; padding: 0 7px 2px 6px; }
.qpage { flex: 1; min-height: 0; background: #fff; border: 1px solid #dcdcdc; padding: 2px 2px 1px; display: flex; flex-direction: column; }
.dtree { flex: 1; min-height: 0; border: 1px solid #82878f; background: #fff; display: flex; flex-direction: column; padding: 1px; }
.trow { flex: 1; min-height: 0; display: flex; }
.trow ul { flex: 1; min-width: 0; overflow: hidden; padding-left: 4px; font-family: "Noto Sans Mono CJK SC", "Noto Sans CJK SC", sans-serif; }
.trow li { display: flex; height: 16px; white-space: nowrap; align-items: center; }
.trow li svg { width: 19px; height: 10px; }
.g { width: 19px; height: 16px; flex: none; background: repeating-linear-gradient(#888 0 1px, transparent 1px 2px) 9px 0 / 1px 16px no-repeat; }
.g.h { background: repeating-linear-gradient(#888 0 1px, transparent 1px 2px) 9px 0 / 1px 16px no-repeat, repeating-linear-gradient(90deg, #888 0 1px, transparent 1px 2px) 9px 8px / 10px 1px no-repeat; }
.hl { background: #cce8ff; }
.dvthumb { height: 173px; margin-top: 28px; }
.dhs { padding-right: 20px; }
.dhthumb { width: 105px; margin-left: 4px; }
.radios { height: 38px; flex: none; background: #f0f0f0; display: flex; align-items: center; gap: 20px; padding-left: 10px; }
.radios label { gap: 9px; }
.radios input { width: 11px; height: 11px; border-color: #999; }
.radios input:checked { background: radial-gradient(#000 2px, #fff 3px); }
.dright { flex: 1; background: #fff; border: 1px solid #a0a0a8; border-right: 0; padding: 1px; }
.gdlg { width: 554px; }
.gdlg .sel { background: #dcecf9; }
```
